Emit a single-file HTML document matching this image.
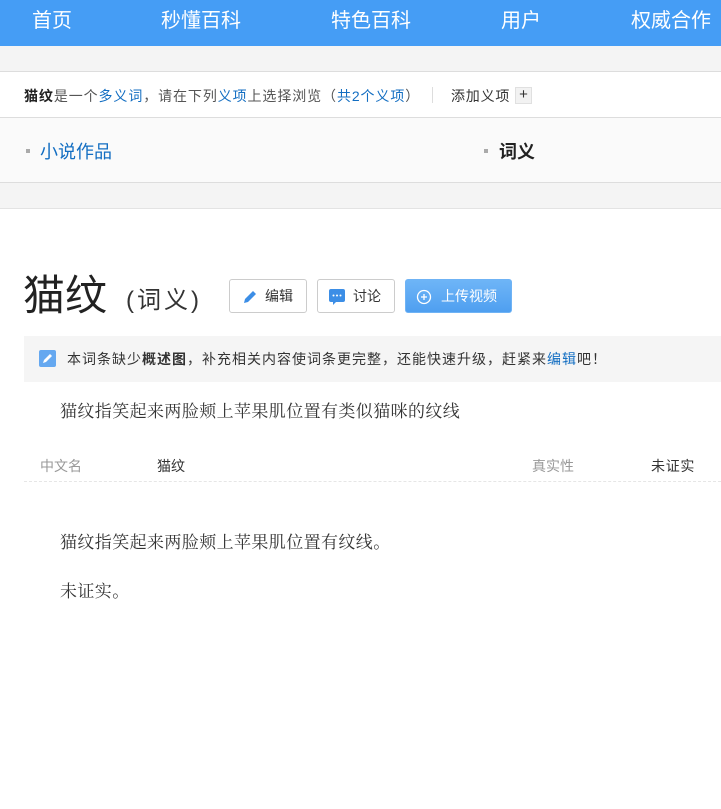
<!DOCTYPE html>
<html><head><meta charset="utf-8"><style>
*{margin:0;padding:0;box-sizing:border-box}
body{width:721px;height:809px;overflow:hidden;background:#fff;font-family:"Liberation Sans","Noto Sans CJK SC",sans-serif;position:relative;color:#333}
.a{position:absolute;white-space:nowrap}
.nav{position:absolute;left:0;top:0;width:721px;height:46px;background:#459df5}
.nav span{position:absolute;top:4px;color:#fff;font-size:20px}
.blue{color:#136ec2}
.btn{position:absolute;top:279px;height:34px;border:1px solid #ccc;border-radius:3px;background:#fff;font-size:14px;color:#333;line-height:32px}
.serif{font-family:"Liberation Serif","Noto Serif CJK SC",serif;letter-spacing:0.4px}
</style></head><body>
<div class="nav">
<span style="left:32px">首页</span><span style="left:161px">秒懂百科</span><span style="left:331px">特色百科</span><span style="left:501px">用户</span><span style="left:631px">权威合作</span>
</div>
<div class="a" style="left:0;top:46px;width:721px;height:26px;background:#f4f4f4;border-bottom:1px solid #ddd"></div>
<div class="a" style="left:0;top:117px;width:721px;height:66px;background:#fafafa;border-top:1px solid #ddd;border-bottom:1px solid #ddd"></div>
<div class="a" style="left:0;top:183px;width:721px;height:26px;background:#f4f4f4;border-bottom:1px solid #e3e3e3"></div>
<div class="a" style="left:24px;top:86px;font-size:14px;color:#555;letter-spacing:0.9px"><b style="color:#222">猫纹</b>是一个<span class="blue">多义词</span>，请在下列<span class="blue">义项</span>上选择浏览（<span class="blue">共2个义项</span>）</div>
<div class="a" style="left:432px;top:87px;width:1px;height:16px;background:#ddd"></div>
<div class="a" style="left:451px;top:86px;font-size:14px;color:#333;letter-spacing:0.8px">添加义项</div>
<div class="a" style="left:515px;top:87px;width:17px;height:17px;background:#f2f2f2;border:1px solid #e0e0e0;font-size:15px;line-height:14px;text-align:center;color:#333">+</div>
<div class="a" style="left:26px;top:149px;width:4px;height:4px;background:#aaa"></div>
<div class="a blue" style="left:40px;top:138px;font-size:18px">小说作品</div>
<div class="a" style="left:484px;top:149px;width:4px;height:4px;background:#aaa"></div>
<div class="a" style="left:499px;top:138px;font-size:18px;font-weight:bold;color:#222">词义</div>
<div class="a" style="left:23px;top:262px;font-size:42px;color:#222">猫纹</div>
<div class="a" style="left:126px;top:280px;font-size:24px;color:#333;letter-spacing:3px">(词义)</div>
<div class="btn" style="left:229px;width:78px"><svg style="position:absolute;left:12px;top:9px" width="16" height="16" viewBox="0 0 16 16"><path d="M2 14l1-4 8-8 3 3-8 8z" fill="#3c8ee6"/></svg><span style="position:absolute;left:35px">编辑</span></div>
<div class="btn" style="left:317px;width:78px"><svg style="position:absolute;left:11px;top:9px" width="16" height="16" viewBox="0 0 16 16"><rect x="0" y="0" width="16" height="13" rx="2" fill="#3c8ee6"/><path d="M4 13l0 3 3-3z" fill="#3c8ee6"/><circle cx="4.5" cy="6.5" r="1" fill="#fff"/><circle cx="8" cy="6.5" r="1" fill="#fff"/><circle cx="11.5" cy="6.5" r="1" fill="#fff"/></svg><span style="position:absolute;left:35px">讨论</span></div>
<div class="btn" style="left:405px;width:107px;border-color:#6fb3f5;background:linear-gradient(#6eb5f7,#4f9ff0);color:#fff"><svg style="position:absolute;left:10px;top:9px" width="16" height="16" viewBox="0 0 16 16"><circle cx="8" cy="8" r="6.5" fill="none" stroke="#fff" stroke-width="1.3"/><path d="M8 5v6M5 8h6" stroke="#fff" stroke-width="1.3"/></svg><span style="position:absolute;left:35px">上传视频</span></div>
<div class="a" style="left:24px;top:336px;width:697px;height:46px;background:#f5f5f5"></div>
<div class="a" style="left:39px;top:350px;width:17px;height:17px;background:#65a8f0;border-radius:2px"><svg width="17" height="17" viewBox="0 0 17 17"><path d="M4 13l1-3 6-6 2 2-6 6z" fill="#fff"/></svg></div>
<div class="a" style="left:67px;top:349px;font-size:14px;color:#333;letter-spacing:1px">本词条缺少<b>概述图</b>，补充相关内容使词条更完整，还能快速升级，赶紧来<span class="blue">编辑</span>吧！</div>
<div class="a serif" style="left:60px;top:397px;font-size:17px;color:#333">猫纹指笑起来两脸颊上苹果肌位置有类似猫咪的纹线</div>
<div class="a" style="left:40px;top:456px;font-size:14px;color:#999">中文名</div>
<div class="a" style="left:157px;top:456px;font-size:14px;color:#333">猫纹</div>
<div class="a" style="left:532px;top:456px;font-size:14px;color:#999">真实性</div>
<div class="a" style="left:651px;top:456px;font-size:14px;color:#333;letter-spacing:0.7px">未证实</div>
<div class="a" style="left:24px;top:481px;width:697px;border-top:1px dashed #e6e6e6"></div>
<div class="a serif" style="left:60px;top:528px;font-size:17px;color:#333">猫纹指笑起来两脸颊上苹果肌位置有纹线。</div>
<div class="a serif" style="left:60px;top:577px;font-size:17px;color:#333">未证实。</div>
</body></html>
